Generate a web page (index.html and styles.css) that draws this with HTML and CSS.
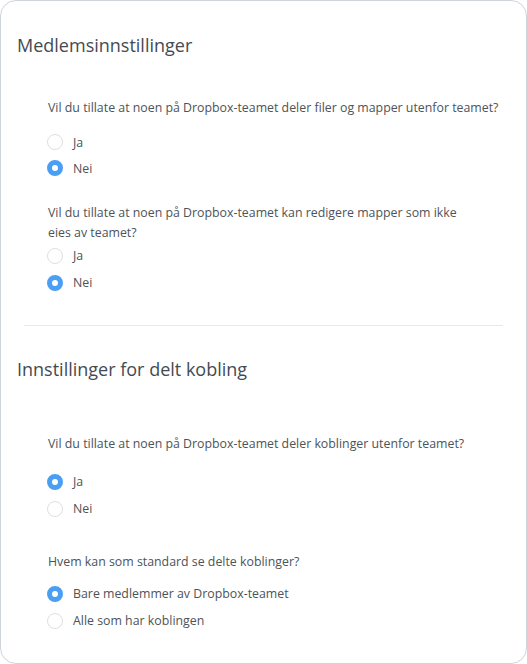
FILE: index.html
```html
<!DOCTYPE html>
<html lang="nb">
<head>
    <meta charset="UTF-8">
    <meta name="viewport" content="width=device-width, initial-scale=1.0">
    <title>Teaminnstillinger</title>
    <link rel="stylesheet" href="styles.css">
</head>
<body>
    <div class="card">
        <section class="section">
            <h2 class="section-title">Medlemsinnstillinger</h2>

            <div class="setting first">
                <div class="question">Vil du tillate at noen på Dropbox-teamet deler filer og mapper utenfor teamet?</div>
                <label class="option"><span class="radio"></span>Ja</label>
                <label class="option"><span class="radio checked"></span>Nei</label>
            </div>

            <div class="setting tight">
                <div class="question narrow">Vil du tillate at noen på Dropbox-teamet kan redigere mapper som ikke eies av teamet?</div>
                <label class="option"><span class="radio"></span>Ja</label>
                <label class="option"><span class="radio checked"></span>Nei</label>
            </div>
        </section>

        <div class="divider"></div>

        <section class="section">
            <h2 class="section-title">Innstillinger for delt kobling</h2>

            <div class="setting first loose">
                <div class="question">Vil du tillate at noen på Dropbox-teamet deler koblinger utenfor teamet?</div>
                <label class="option"><span class="radio checked"></span>Ja</label>
                <label class="option"><span class="radio"></span>Nei</label>
            </div>

            <div class="setting compact">
                <div class="question">Hvem kan som standard se delte koblinger?</div>
                <label class="option"><span class="radio checked"></span>Bare medlemmer av Dropbox-teamet</label>
                <label class="option"><span class="radio"></span>Alle som har koblingen</label>
            </div>
        </section>
    </div>
</body>
</html>
```

FILE: styles.css
```css
body {
    margin: 0;
    background: #fff;
    font-family: 'Open Sans', sans-serif;
    color: #4d5358;
}

.card {
    width: 527px;
    height: 664px;
    box-sizing: border-box;
    border: 1px solid #cfd4db;
    border-radius: 16px;
    padding-top: 32px;
    background: #fff;
}

.section-title {
    margin: 0;
    padding-left: 16px;
    font-size: 18px;
    line-height: 24px;
    font-weight: 400;
    color: #434b52;
}

/* each question with its radio options */
.setting {
    padding-left: 46px;
    margin-top: 30px;
}

.setting.first {
    margin-top: 41px;
}

.setting.loose {
    margin-top: 53px;
}

.setting.tight {
    margin-top: 22px;
}

.question {
    padding-left: 1px;
    font-size: 12.35px;
    line-height: 20px;
    margin-bottom: 11px;
}

.setting.tight .question {
    max-width: 420px;
    margin-bottom: -1px;
}

.setting.loose .question {
    margin-bottom: 14px;
}

.setting.compact .question {
    margin-bottom: 8px;
}

.option {
    display: flex;
    align-items: center;
    height: 27px;
    font-size: 12.35px;
}

.setting.first:not(.loose) .option {
    height: 26px;
}

.radio {
    width: 16px;
    height: 16px;
    box-sizing: border-box;
    border: 1px solid #dcdfe3;
    border-radius: 50%;
    margin-right: 10px;
    background: #fff;
    flex-shrink: 0;
}

.radio.checked {
    border: 5px solid #4a9ff5;
}

.divider {
    height: 1px;
    background: #e6eaee;
    margin: 29px 23px 31px;
}
```
